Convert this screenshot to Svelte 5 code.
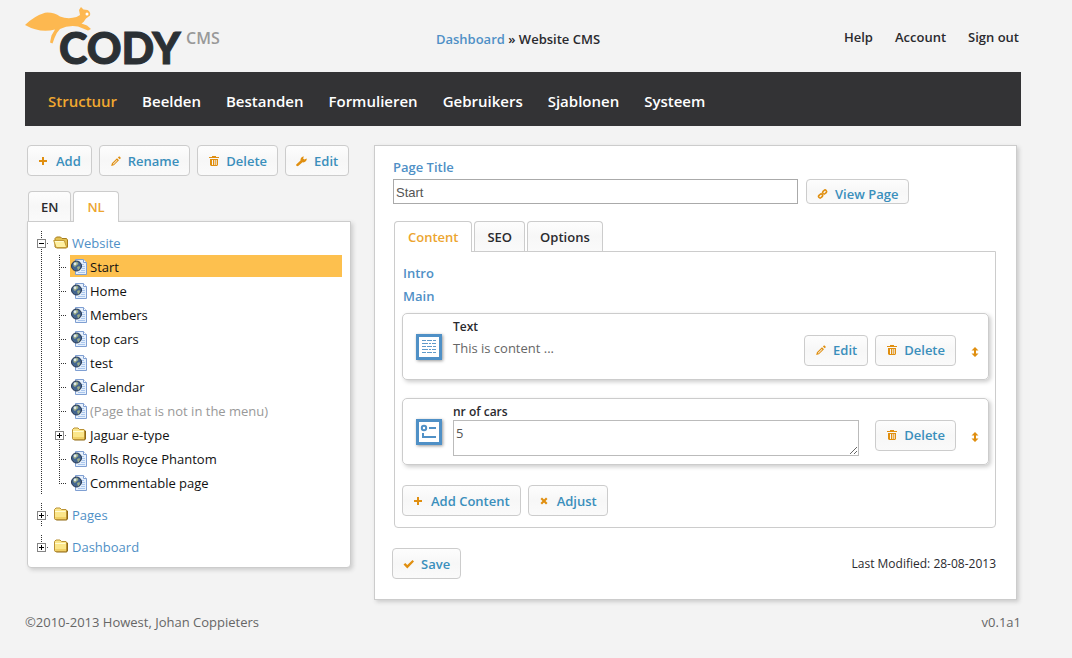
<script>
  const nav = ['Structuur', 'Beelden', 'Bestanden', 'Formulieren', 'Gebruikers', 'Sjablonen', 'Systeem'];
  const pages = [
    { name: 'Start', selected: true },
    { name: 'Home' },
    { name: 'Members' },
    { name: 'top cars' },
    { name: 'test' },
    { name: 'Calendar' },
    { name: '(Page that is not in the menu)', hidden: true },
    { name: 'Jaguar e-type', folder: true },
    { name: 'Rolls Royce Phantom' },
    { name: 'Commentable page' }
  ];
  let title = $state('Start');
  let cars = $state('5');
</script>

{#snippet icon(kind)}
  <svg class="icon" width="12" height="12" viewBox="0 0 12 12" aria-hidden="true">
    {#if kind === 'plus'}
      <path d="M4 2h2v3h3v2H6v3H4V7H1V5h3z" fill="#e08f10" />
    {:else if kind === 'pencil'}
      <path d="M1.200 11l.7-2.800L7 3.200l2 2-5.100 5.100zM2.800 8.900l.6.600 4-4-.6-.6zM7.900 2.500l1.300-1.300 1.800 1.800-1.300 1.300z" fill="#e08f10" fill-rule="evenodd" />
    {:else if kind === 'trash'}
      <path d="M1 2h3V1h4v1h3v1H1zM2 4h8v6l-1 1H3l-1-1zM4 5v5h1V5zM6 5v5h.7V5zM7.700 5v5h1V5z" fill="#e08f10" fill-rule="evenodd" />
    {:else if kind === 'wrench'}
      <path d="M.5 10.800c-.6-.6-.4-1.200 0-1.600l4-3.700C4.200 3.500 5.500 1.500 8.100 1.500L7 3.300l1.300 1.300 2.400-1C11 6 9 7.800 6.500 7.300L2.500 10.800c-.6.500-1.400.600-2 0z" fill="#e08f10" />
    {:else if kind === 'link'}
      <g fill="none" stroke="#e08f10" stroke-width="1.600"><rect x="-2.200" y="-1.500" width="4.400" height="3" rx="1.500" transform="translate(3.600 8) rotate(-45)" /><rect x="-2.200" y="-1.500" width="4.400" height="3" rx="1.500" transform="translate(7.600 4) rotate(-45)" /></g>
    {:else if kind === 'cross'}
      <path d="M1.500 4L3 2.500l2 2 2-2L8.500 4l-2 2 2 2L7 9.500l-2-2-2 2L1.500 8l2-2z" fill="#e08f10" />
    {:else if kind === 'check'}
      <path d="M.5 6.500L2.300 5l2 2L9.500 2 11 3.500 4.300 10.500z" fill="#e08f10" />
    {:else}
      <path d="M6 1l3.500 3.500H7v3h2.500L6 11 2.500 7.500H5v-3H2.500z" fill="#e08f10" />
    {/if}
  </svg>
{/snippet}

{#snippet folder(open)}
  <svg class="glyph" width="16" height="16" viewBox="0 0 16 16" aria-hidden="true">
    {#if open}
      <path d="M2 12V3.500L3.500 2h4L9 3.500h4.500L14.500 5v7l-1 1H4z" fill="#e2c052" stroke="#a67c1c" />
      <path d="M.7 5.500h10.600l2.400 7H3.200z" fill="#fff0a0" stroke="#c29a34" />
      <path d="M2 6.500h8.500" stroke="#fffbd2" />
    {:else}
      <path d="M3 13.500h10.500l1.500-1.500V4l-1.500-1" fill="#8f6a14" />
      <path d="M1.500 11V2.500L3 1h4l1.500 1.500h4.500l.5.500v9l-1 .5h-10.500z" fill="#fbe68a" stroke="#b99135" />
      <path d="M2 4.500h10.500" stroke="#fffbd2" />
      <path d="M2 10h11v2H2.500z" fill="#f0d065" />
    {/if}
  </svg>
{/snippet}

{#snippet pageIcon()}
  <svg class="glyph" width="16" height="16" viewBox="0 0 16 16" aria-hidden="true">
    <path d="M4.500.5h8l3 3v12h-11z" fill="#e6f0fc" stroke="#7f9fd2" />
    <path d="M12.500.5v3h3" fill="#fff" stroke="#7f9fd2" />
    <path d="M10 5.500h3M11 7.500h3M11 9.500h3M10 11.500h4M7 13.500h7" stroke="#a9c6ee" />
    <circle cx="5.500" cy="7" r="5" fill="#43658f" stroke="#25354f" />
    <path d="M2.500 5c1-2 3-2.500 4-2l1 2-2 1.500L4 8 2.500 7zM6 8l2.500-1 .5 2-2 2.500z" fill="#9fae86" />
    <circle cx="4" cy="4.800" r="1.400" fill="#dfe9ee" />
  </svg>
{/snippet}

{#snippet toggle(open)}
  <svg class="toggle" width="13" height="9" viewBox="0 0 13 9" aria-hidden="true">
    <rect x=".5" y=".5" width="8" height="8" fill="#fff" stroke="#848484" />
    <path d={open ? 'M2 4.500h5' : 'M2 4.500h5M4.500 2v5'} stroke="#000" />
    <path d="M10 4.500h1" stroke="#555" />
  </svg>
{/snippet}

<div class="page">
  <header>
    <a class="logo" href="#home" aria-label="Cody CMS">
      <svg width="210" height="72" viewBox="0 0 210 72" aria-hidden="true">
        <path d="M0 25Q9 16 20 12.700Q29 12 35 16.500Q43 19.500 51.500 17L55 15 54 10 56 7 58.500 9.500 62.500 10Q66 12 65 15.500L61 18.500Q59 22 56.500 23.500L62 25.500 66 29 63 30.500 53 26.500Q43 25 35 29Q31 33 29.500 38L27.500 43.500 25 42.500 26.500 35.500 30 29.500Q15 33.500 0 25z" fill="#fdb850" />
        <circle cx="62" cy="14" r="1.500" fill="#fff" />
        <text class="word" x="34" y="64">CODY</text>
        <text class="cms" x="161" y="44">CMS</text>
      </svg>
    </a>
    <div class="crumbs"><a href="#dashboard">Dashboard</a> » Website CMS</div>
    <div class="links"><a href="#help">Help</a><a href="#account">Account</a><a href="#out">Sign out</a></div>
  </header>

  <nav>
    {#each nav as item, i}
      <a href="#{item}" class:active={i === 0}>{item}</a>
    {/each}
  </nav>

  <main>
    <aside>
      <div class="tools">
        <button>{@render icon('plus')}Add</button>
        <button>{@render icon('pencil')}Rename</button>
        <button>{@render icon('trash')}Delete</button>
        <button>{@render icon('wrench')}Edit</button>
      </div>
      <div class="tabs langs"><button class="tab">EN</button><button class="tab active">NL</button></div>
      <div class="tree">
        <div class="root">
          <div class="row">{@render toggle(true)}{@render folder(true)}<a href="#website">Website</a></div>
          <ul>
            {#each pages as p}
              <li class:parent={p.folder}>
                {#if p.folder}{@render toggle(false)}{/if}
                <a class="leaf" class:selected={p.selected} class:muted={p.hidden} href="#page">
                  {#if p.folder}{@render folder(false)}{:else}{@render pageIcon()}{/if}{p.name}
                </a>
              </li>
            {/each}
          </ul>
        </div>
        <div class="root"><div class="row">{@render toggle(false)}{@render folder(false)}<a href="#pages">Pages</a></div></div>
        <div class="root last"><div class="row">{@render toggle(false)}{@render folder(false)}<a href="#dash">Dashboard</a></div></div>
      </div>
    </aside>

    <section class="editor">
      <label for="title">Page Title</label>
      <div class="title-row">
        <input id="title" type="text" bind:value={title} />
        <button class="short">{@render icon('link')}View Page</button>
      </div>
      <div class="tabs"><button class="tab active">Content</button><button class="tab">SEO</button><button class="tab">Options</button></div>
      <div class="content">
        <h3>Intro</h3>
        <h3>Main</h3>
        <article>
          <svg class="kind" width="26" height="26" viewBox="0 0 26 26" aria-hidden="true">
            <rect x="1.500" y="1.500" width="23" height="23" fill="#fff" stroke="#4f90c6" stroke-width="3" />
            <g stroke="#5f9aca">
              <path d="M6 6.500h14M6 12.500h14M6 18.500h14" stroke-dasharray="4 1 5 1" />
              <path d="M6 9.500h14M6 15.500h14" stroke-dasharray="6 1 2 1" />
            </g>
          </svg>
          <div class="body"><h4>Text</h4><p>This is content ...</p></div>
          <div class="actions">
            <button>{@render icon('pencil')}Edit</button>
            <button>{@render icon('trash')}Delete</button>
          </div>
          {@render icon('move')}
        </article>
        <article>
          <svg class="kind" width="26" height="26" viewBox="0 0 26 26" aria-hidden="true">
            <rect x="1.500" y="1.500" width="23" height="23" fill="#fff" stroke="#4f90c6" stroke-width="3" />
            <g fill="none" stroke="#4f90c6" stroke-width="2"><circle cx="8" cy="9" r="2.200" /><path d="M13 9h7M7 14v4h13" /></g>
          </svg>
          <div class="body"><h4><label for="cars">nr of cars</label></h4><textarea id="cars" bind:value={cars}></textarea></div>
          <div class="actions"><button>{@render icon('trash')}Delete</button></div>
          {@render icon('move')}
        </article>
        <div class="tools">
          <button>{@render icon('plus')}Add Content</button>
          <button>{@render icon('cross')}Adjust</button>
        </div>
      </div>
      <div class="save-row">
        <button>{@render icon('check')}Save</button>
        <span>Last Modified: 28-08-2013</span>
      </div>
    </section>
  </main>

  <footer><span>©2010-2013 Howest, Johan Coppieters</span><span>v0.1a1</span></footer>
</div>

<style>
  :global(body) { margin: 0; background: #f3f3f3; }
  * { box-sizing: border-box; }
  .page { padding: 0 51px 24px 25px; font: 13px/20px "Trebuchet MS", "Open Sans", sans-serif; color: #2a2a2e; }
  a { color: inherit; text-decoration: none; }
  svg { display: block; flex: none; }

  header { display: grid; grid-template-columns: 1fr auto 1fr; height: 72px; font-weight: 600; }
  .word { font: 900 43px Lato, sans-serif; fill: #2b3034; stroke: #2b3034; stroke-width: 1px; }
  .cms { font: 600 16px "Open Sans", sans-serif; fill: #999; }
  .crumbs { padding: 29px 10px 0 0; }
  .crumbs a { color: #4f90c6; }
  .links { display: flex; justify-content: flex-end; gap: 22px; padding: 27px 2px 0 0; }

  nav { display: flex; align-items: center; gap: 25px; height: 54px; padding: 4px 23px 0; background: #333335; color: #fff; font-size: 15px; font-weight: 600; }
  nav .active { color: #f0a830; }

  main { display: flex; align-items: flex-start; gap: 19px; padding: 19px 4px 0 2px; }
  aside { flex: none; width: 328px; }
  button {
    display: flex; align-items: center; gap: 6px; height: 31px; padding: 0 10px; white-space: nowrap;
    border: 1px solid #ccc; border-radius: 4px; background: linear-gradient(#fdfdfd, #f7f7f7 50%, #fafafa);
    font: 600 13px/20px "Trebuchet MS", "Open Sans", sans-serif; color: #3a8fbc;
  }
  .tools { display: flex; gap: 7px; }

  .tabs { display: flex; gap: 2px; padding-left: 1px; }
  .tab { height: 30px; padding: 1px 12px 0; border-bottom: 0; border-radius: 4px 4px 0 0; color: #2a2a2e; }
  .tab.active { height: 31px; margin-bottom: -1px; padding: 1px 13px; background: #fff; color: #eca52f; position: relative; }
  .langs { padding-top: 15px; }

  .tree { width: 324px; padding: 9px 8px 0; background: #fff; border: 1px solid #ccc; border-radius: 0 0 4px 4px; box-shadow: 2px 2px 4px #ccc; color: #111; }
  .root { padding: 0 0 8px 5px; background: repeating-linear-gradient(#333 0 1px, transparent 1px 2px) 5px 0 / 1px calc(100% - 8px) no-repeat; }
  .root.last { background-size: 1px 12px; }
  .row { display: flex; align-items: center; height: 24px; }
  .row .toggle { margin: 0 3px 0 -4px; }
  .row a { margin-left: 3px; color: #4f90c6; }
  ul { margin: 0; padding: 0 0 0 18px; list-style: none; }
  li { display: flex; height: 24px; padding-left: 11px;
    background: repeating-linear-gradient(#333 0 1px, transparent 1px 2px) 0 0 / 1px 100% no-repeat,
      repeating-linear-gradient(90deg, #333 0 1px, transparent 1px 2px) 0 12px / 7px 1px no-repeat; }
  li:last-child { background-size: 1px 13px, 7px 1px; }
  .parent { padding-left: 0; }
  .parent .toggle { margin: 8px 2px 0 -4px; }
  .leaf { display: flex; flex: 1; align-items: center; gap: 3px; height: 22px; padding: 2px 0 0 1px; white-space: nowrap; }
  .selected { background: #fdc04e; }
  .muted { color: #999; }

  .editor { flex: 1; min-width: 0; padding: 11px 20px 20px 18px; background: #fff; border: 1px solid #ccc; box-shadow: 2px 2px 4px #ccc; }
  .editor > label, h3 { display: block; font-size: 13px; font-weight: 600; color: #4f90c6; }
  .title-row { display: flex; align-items: flex-end; gap: 8px; padding-top: 2px; margin-bottom: 17px; }
  input { flex: 1; max-width: 405px; min-width: 0; height: 25px; padding: 2px 2px 0; border: 1px solid #aaa; font: 13px "Liberation Sans", sans-serif; color: #555; }
  .short { height: 25px; padding-top: 4px; }
  .content { padding: 11px 6px 11px 7px; margin: 0 0 0 1px; border: 1px solid #ccc; border-radius: 0 0 4px 4px; }
  h3 { margin: 0 0 3px 1px; line-height: 20px; }
  article { display: flex; align-items: center; height: 67px; margin-bottom: 18px; padding: 0 7px 0 13px; border: 1px solid #ccc; border-radius: 5px; box-shadow: 2px 2px 4px #ccc; }
  h3 + article { margin-top: 7px; }
  .kind { box-shadow: 1px 1px 3px #999; }
  .body { flex: 1; align-self: stretch; padding: 5px 16px 0 11px; }
  h4 { margin: 0; font-size: 12px; line-height: 16px; font-weight: 600; }
  p { margin: 3px 0 0; color: #666; }
  textarea { display: block; width: 100%; height: 36px; padding: 2px; border: 1px solid #bbb; font: 13px/20px "Trebuchet MS", "Open Sans", sans-serif; color: #555; }
  .actions { display: flex; gap: 7px; padding-top: 7px; margin-right: 13px; }
  article > .icon { margin-top: 10px; }
  .content .tools { margin-top: 20px; }
  .save-row { display: flex; justify-content: space-between; align-items: center; margin: 20px 0 0 -1px; font-size: 12px; }
  footer { display: flex; justify-content: space-between; padding-top: 12px; color: #666; }
</style>
